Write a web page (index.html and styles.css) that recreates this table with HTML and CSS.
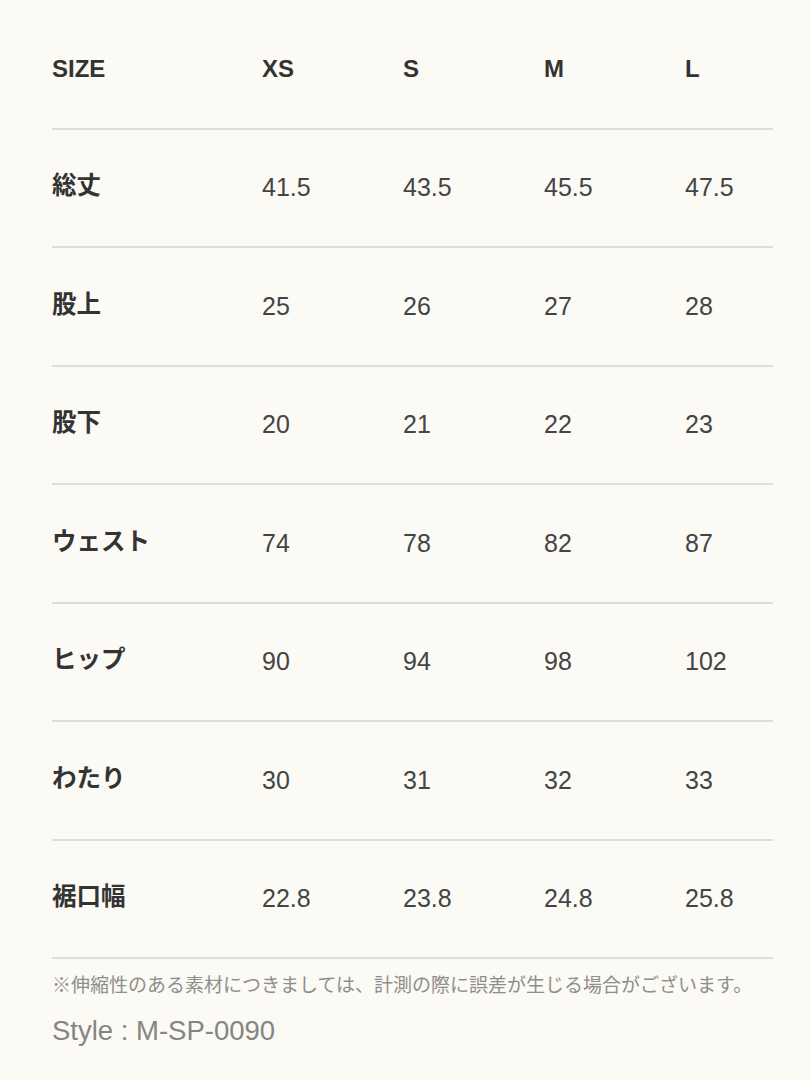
FILE: index.html
```html
<!DOCTYPE html>
<html lang="ja">
<head>
<meta charset="utf-8">
<title>Size</title>
<link rel="stylesheet" href="styles.css">
</head>
<body>
<div class="page">
  <div class="table">
    <div class="row head">
      <div class="label">SIZE</div><div>XS</div><div>S</div><div>M</div><div>L</div>
    </div>
    <div class="row">
      <div class="label">総丈</div><div>41.5</div><div>43.5</div><div>45.5</div><div>47.5</div>
    </div>
    <div class="row">
      <div class="label">股上</div><div>25</div><div>26</div><div>27</div><div>28</div>
    </div>
    <div class="row">
      <div class="label">股下</div><div>20</div><div>21</div><div>22</div><div>23</div>
    </div>
    <div class="row">
      <div class="label">ウェスト</div><div>74</div><div>78</div><div>82</div><div>87</div>
    </div>
    <div class="row">
      <div class="label">ヒップ</div><div>90</div><div>94</div><div>98</div><div>102</div>
    </div>
    <div class="row">
      <div class="label">わたり</div><div>30</div><div>31</div><div>32</div><div>33</div>
    </div>
    <div class="row">
      <div class="label">裾口幅</div><div>22.8</div><div>23.8</div><div>24.8</div><div>25.8</div>
    </div>
  </div>
  <p class="note">※伸縮性のある素材につきましては、計測の際に誤差が生じる場合がございます。</p>
  <p class="style">Style : M-SP-0090</p>
</div>
</body>
</html>
```
FILE: styles.css
```css
html, body {
  margin: 0;
  padding: 0;
  background: #fbfaf4;
}
body {
  font-family: "Liberation Sans", "Noto Sans CJK JP", sans-serif;
  color: #3a3a3a;
}
.page {
  width: 721px;
  padding: 11px 0 0 52px;
}
.row {
  display: grid;
  grid-template-columns: 210px 141px 141px 141px 1fr;
  align-items: center;
  height: 118.5px;
  box-sizing: border-box;
  border-bottom: 2px solid #deddd6;
  font-size: 25px;
  color: #444;
}
.row .label {
  font-family: "Noto Sans CJK JP", sans-serif;
  font-size: 24.5px;
  font-weight: 700;
  color: #333;
  margin-top: -8px;
}
.head {
  font-size: 24px;
  font-weight: 700;
  color: #333;
}
.head .label {
  font-family: "Liberation Sans", sans-serif;
  font-size: 24px;
  margin-top: 0;
}
.note {
  margin: 12px 0 0;
  font-family: "Noto Sans CJK JP", sans-serif;
  font-size: 19px;
  line-height: 26px;
  color: #8e8e8b;
  white-space: nowrap;
}
.style {
  margin: 18px 0 0;
  font-size: 27.5px;
  line-height: 32px;
  color: #858582;
}
```
